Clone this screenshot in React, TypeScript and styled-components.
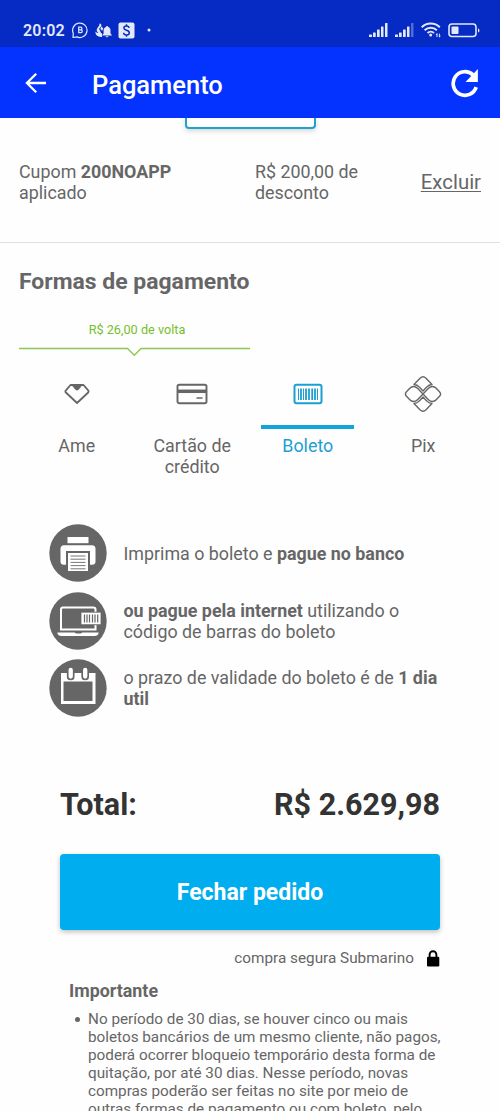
import React from 'react';
import styled, { createGlobalStyle } from 'styled-components';

const GlobalStyle = createGlobalStyle`
  * { box-sizing: border-box; }
  body {
    margin: 0;
    background: #fefefe;
    color: #666;
    font-family: Roboto, 'Liberation Sans', sans-serif;
  }
`;

const Screen = styled.div`
  width: 500px;
  height: 1111px;
  overflow: hidden;
  display: flex;
  flex-direction: column;
`;

const StatusBar = styled.div`
  flex: none;
  height: 47px;
  padding: 13px 20px 0 23px;
  display: flex;
  justify-content: space-between;
  background: #062bc4;
  color: #e3e8fb;
`;

const StatusGroup = styled.div<{ $gap: number }>`
  display: flex;
  align-items: center;
  height: 34px;
  gap: ${(p) => p.$gap}px;
`;

const Clock = styled.span`
  width: 43px;
  font-size: 16px;
  font-weight: 600;
  letter-spacing: 0.2px;
  white-space: nowrap;
`;

const Header = styled.header`
  flex: none;
  height: 71px;
  padding: 0 21px 0 25px;
  display: flex;
  align-items: center;
  background: #0433ff;
  color: #fff;
`;

const HeaderTitle = styled.h1`
  flex: 1;
  margin: 4px 0 0 45px;
  font-size: 25.5px;
  font-weight: 500;
  line-height: 30px;
`;

const Coupon = styled.section`
  flex: none;
  height: 125px;
  border-bottom: 1px solid #e0e0e0;
`;

const CutButton = styled.div`
  width: 131px;
  height: 11px;
  margin: 0 auto;
  border: 2px solid #1fa3cb;
  border-top: 0;
  border-radius: 0 0 4px 4px;
  box-shadow: 0 2px 5px rgba(0, 0, 0, 0.16);
`;

const CouponRow = styled.div`
  display: flex;
  align-items: center;
  padding: 32px 19px 0;
  font-size: 17.85px;
  line-height: 21px;
`;

const CouponCell = styled.div<{ $width: number }>`
  width: ${(p) => p.$width}px;
`;

const RemoveLink = styled.a`
  margin-left: auto;
  font-size: 20.4px;
  text-decoration: underline;
  text-decoration-thickness: 1px;
  text-underline-offset: 2px;
`;

const Methods = styled.section`
  flex: none;
  height: 281px;
  padding: 25px 19px 0;
`;

const SectionTitle = styled.h2`
  margin: 0;
  font-size: 22.95px;
  font-weight: 700;
  line-height: 28px;
`;

const Cashback = styled.div`
  width: 231px;
  margin-top: 25px;
  display: flex;
  flex-direction: column;
  align-items: center;
  gap: 8px;
  color: #74c02c;
  font-size: 12.7px;
  line-height: 18px;
`;

const CashbackText = styled.span`
  padding-left: 5px;
`;

const Tabs = styled.div`
  display: grid;
  grid-template-columns: repeat(4, 1fr);
  margin-top: 14px;
`;

const Tab = styled.div<{ $active?: boolean }>`
  display: flex;
  flex-direction: column;
  align-items: center;
  text-align: center;
  font-size: 17.85px;
  line-height: 21px;
  color: ${(p) => (p.$active ? '#1d9fd3' : '#666')};
`;

const TabIcon = styled.div<{ $active?: boolean }>`
  width: 93px;
  height: 58px;
  padding-top: 4px;
  margin-bottom: 6px;
  display: flex;
  justify-content: center;
  align-items: flex-start;
  border-bottom: 4px solid ${(p) => (p.$active ? '#12a4dc' : 'transparent')};

  svg {
    height: 38px;
  }
`;

const Steps = styled.ul`
  flex: none;
  list-style: none;
  margin: 0;
  padding: 0 49px 0 49px;
  display: flex;
  flex-direction: column;
  gap: 9.5px;
`;

const Step = styled.li`
  display: flex;
  align-items: center;
  gap: 16.5px;
  font-size: 17.85px;
  line-height: 21px;
  white-space: nowrap;
`;

const Checkout = styled.section`
  flex: none;
  padding: 69px 60px 0;
`;

const Total = styled.div`
  display: flex;
  justify-content: space-between;
  color: #333;
  font-size: 30.5px;
  font-weight: 700;
  line-height: 38px;
`;

const SubmitButton = styled.button`
  display: block;
  width: 100%;
  height: 76px;
  margin-top: 30px;
  border: 0;
  border-radius: 4px;
  background: #00adef;
  box-shadow: 0 2px 5px rgba(0, 0, 0, 0.25);
  color: #fff;
  font: 700 23px Roboto, sans-serif;
`;

const Secure = styled.div`
  display: flex;
  justify-content: flex-end;
  align-items: center;
  gap: 12px;
  margin-top: 18px;
  font-size: 15.3px;
  line-height: 20px;
`;

const Notice = styled.section`
  padding: 12px 50px 0 69px;
  font-size: 15.28px;
  line-height: 18.1px;
`;

const NoticeTitle = styled.h3`
  margin: 0 0 8px;
  font-size: 17.85px;
  line-height: 22px;
`;

const NoticeItem = styled.div`
  display: flex;
  gap: 8px;
  white-space: nowrap;
`;

const Bullet = styled.span`
  flex: none;
  width: 5px;
  height: 5px;
  margin: 7px 0 0 6px;
  border-radius: 50%;
  background: #666;
`;

const ChatIcon = () => (
  <svg width="17" height="17" viewBox="0 0 17 17" fill="none" stroke="currentColor">
    <path d="M1 15.500l.3-4.200A7.200 7.200 0 1 1 5 14.900z" strokeWidth="1.200" strokeLinejoin="round" />
    <path d="M6.700 5.200h1.900a1.300 1.300 0 0 1 0 2.700H6.700zM6.700 7.900h2.200a1.400 1.400 0 0 1 0 2.800H6.700z" strokeWidth="1.200" />
  </svg>
);

const MutedIcon = () => (
  <svg width="17" height="15" viewBox="0 0 17 15" fill="currentColor">
    <path d="M4.500.5c1.700.2 2.300 1.500 1.600 2.800L4 6c1.700 2 1.500 4.400 3 4.600V14C3 14.400.2 12.200.4 8.600c1 1.200 2 1.700 2.800 1.200-1.500-1.200-2-3-.9-4.600C3 4 4.700 3 4.500.5z" />
    <path d="M12.100 3c.8 0 1 .5 1.100 1 1.600.5 2.300 1.800 2.300 3.500v3l1.300 1.400v.7H7.300v-.7l1.300-1.400v-3C8.600 5.800 9.400 4.500 11 4c.1-.5.4-1 1.100-1zM10.500 13.200h3c-.3 1.500-2.700 1.500-3 0z" />
    <path d="M6.500 3.200l1.700 2.200-1 2.400L5.300 6z" />
  </svg>
);

const DollarIcon = () => (
  <svg width="17" height="17" viewBox="0 0 17 17">
    <rect x="0.500" y="0.500" width="16" height="16" rx="2" fill="currentColor" />
    <path d="M11.200 5.800C11 4.500 9.900 3.900 8.500 3.900 7 3.900 5.900 4.700 5.900 6c0 3 5.400 1.500 5.400 4.700 0 1.400-1.200 2.300-2.800 2.300-1.700 0-2.800-.9-2.900-2.300M8.500 2.200v2M8.500 12.700v2" fill="none" stroke="#062bc4" strokeWidth="1.500" />
  </svg>
);

const DotIcon = () => (
  <svg width="11" height="4" viewBox="0 0 11 4"><circle cx="8" cy="2" r="1.500" fill="currentColor" /></svg>
);

const SignalIcon = ({ faded }: { faded?: boolean }) => (
  <svg width="19" height="14" viewBox="0 0 19 14" fill="currentColor">
    <rect x="0" y="11.500" width="3" height="2.500" rx=".5" />
    <rect x="4" y="9.500" width="2.700" height="4.500" rx=".5" />
    <rect x="8" y="6.500" width="2.700" height="7.500" rx=".5" />
    <rect x="12" y="3.500" width="2.500" height="10.500" rx=".5" />
    <rect x="16" y="0" width="2.500" height="14" rx=".5" opacity={faded ? 0.35 : 1} />
  </svg>
);

const WifiIcon = () => (
  <svg width="20" height="16" viewBox="0 0 20 16" fill="none" stroke="currentColor" strokeWidth="1.900">
    <path d="M.7 5.200c5-4.900 13.100-4.900 18.100 0M3.600 8.200c3.400-3.300 8.900-3.300 12.300 0M6.500 11c1.900-1.700 4.700-1.700 6.500 0" />
    <circle cx="9.700" cy="13" r="1.500" fill="currentColor" stroke="none" />
    <path d="M16 11.500v3.500M18.400 15.200v-3.500M15 13l1-1.300M19.300 13.800l-1 1.300" strokeWidth="1" />
  </svg>
);

const BatteryIcon = () => (
  <svg width="32" height="15" viewBox="0 0 32 15" fill="none">
    <rect x="1" y="1" width="27" height="12.500" rx="3" stroke="currentColor" strokeWidth="1.600" />
    <rect x="3.500" y="3.500" width="7" height="7.500" rx="1" fill="currentColor" />
    <path d="M30 5.200c2 .8 2 3.500 0 4.300z" fill="currentColor" />
  </svg>
);

const BackIcon = () => (
  <svg width="22" height="22" viewBox="0 0 22 22" fill="none" stroke="currentColor" strokeWidth="2.300">
    <path d="M21 11H2.300M11.200 1.700L1.900 11l9.300 9.300" />
  </svg>
);

const ReloadIcon = () => (
  <svg width="30" height="30" viewBox="0 0 30 30">
    <path d="M27.200 19.200A11.800 11.800 0 1 1 24 6.800" fill="none" stroke="currentColor" strokeWidth="3.700" />
    <path d="M28.900 1v13H16.500z" fill="currentColor" />
  </svg>
);

const CashbackLine = () => (
  <svg width="231" height="10" viewBox="0 0 231 10" fill="none" stroke="#8cc751" strokeWidth="1.300">
    <path d="M0 1.500h108.500l6.800 6.800 6.800-6.800H231" />
  </svg>
);

const AmeIcon = () => (
  <svg width="28" height="34" viewBox="0 0 28 34" stroke="#666" strokeLinejoin="round">
    <path d="M7.500 8h13l4.700 5.300c.6.700.6 1.500 0 2.200L14 26 2.900 15.500c-.7-.7-.7-1.500 0-2.200z" fill="none" strokeWidth="1.800" />
    <path d="M9 8h10l-3.700 4.500q-1.300 1-2.600 0z" fill="#666" strokeWidth="1" />
  </svg>
);

const CardIcon = () => (
  <svg width="32" height="34" viewBox="0 0 32 34" fill="none" stroke="#666">
    <rect x="1.500" y="7.800" width="29" height="18.500" rx="1.800" strokeWidth="1.900" />
    <path d="M1 14.300h30" strokeWidth="3.500" />
    <path d="M20.500 21h6" strokeWidth="1.500" />
  </svg>
);

const BoletoIcon = () => (
  <svg width="30" height="34" viewBox="0 0 30 34" fill="none" stroke="#1d9fd3">
    <rect x="1.500" y="7.800" width="27" height="18.500" rx="2" strokeWidth="2" />
    <path d="M5.500 11.500V23M10.500 11.500V23M24.500 11.500V23" strokeWidth="1" />
    <path d="M8 11.500V23M13 11.500V23M16 11.500V23M19.200 11.500V23M22 11.500V23" strokeWidth="1.800" />
  </svg>
);

const PixIcon = () => (
  <svg width="38" height="38" viewBox="0 0 38 38" fill="none" stroke="#666" strokeWidth="1.400" strokeLinejoin="round">
    <path d="M10 9.500l6-6.300q3-3 6 0l6 6.300c-2.400.2-3.900 1-5.300 2.600L19 16l-3.700-3.900C13.900 10.500 12.400 9.700 10 9.500z" />
    <path d="M10 28.500l6 6.300q3 3 6 0l6-6.300c-2.400-.2-3.900-1-5.300-2.600L19 22l-3.700 3.900c-1.400 1.600-2.900 2.400-5.300 2.600z" />
    <path d="M19 19l-5.500-5.700c-2.400-2.500-5.600-2.300-7.700-.1l-3.300 3.500q-2.200 2.300 0 4.600l3.300 3.500c2.100 2.200 5.300 2.400 7.700-.1z" />
    <path d="M19 19l5.500-5.700c2.400-2.500 5.600-2.300 7.700-.1l3.300 3.500q2.200 2.300 0 4.600l-3.300 3.500c-2.100 2.200-5.300 2.400-7.700-.1z" />
  </svg>
);

const PrinterIcon = () => (
  <svg width="58" height="58" viewBox="0 0 58 58">
    <circle cx="29" cy="29" r="28.700" fill="#666" />
    <path d="M18.500 13h21v6.200h-21z" fill="#fff" />
    <path d="M15 21.200h28q3.500 0 3.500 3.500v13q0 3-3.500 3h-2V27H17v13.700h-2q-3.500 0-3.500-3v-13q0-3.500 3.500-3.500z" fill="#fff" />
    <path d="M19 29h20v18H19z" fill="#fff" />
    <path d="M21.500 32h15M21.500 35.200h15M21.500 38.400h15M21.500 41.600h15M21.500 44.800h15" stroke="#777" strokeWidth="1" />
  </svg>
);

const LaptopIcon = () => (
  <svg width="58" height="58" viewBox="0 0 58 58">
    <circle cx="29" cy="29" r="28.700" fill="#666" />
    <path d="M46.500 20v-2.500q0-2-2-2H14q-2 0-2 2v20h34.500V33" fill="none" stroke="#fff" strokeWidth="2" />
    <path d="M8.500 40.500h41v1.300q-1 2.200-4 2.200h-33q-3 0-4-2.200z" fill="#fff" />
    <path d="M26 40h7v1q-3.500 1-7 0z" fill="#666" />
    <path d="M32 20.200h20v12.500H32z" fill="#fff" stroke="#666" strokeWidth=".8" />
    <path d="M35.500 22.500v8M38 22.500v8M40.500 22.500v8M43.500 22.500v8M46 22.500v8M48.700 22.500v8" stroke="#666" strokeWidth="1.200" />
  </svg>
);

const CalendarIcon = () => (
  <svg width="58" height="58" viewBox="0 0 58 58">
    <circle cx="29" cy="29" r="28.700" fill="#666" />
    <path d="M12 14h34.500v31H12z" fill="#fff" />
    <path d="M14.500 22.500h29V42h-29z" fill="#666" />
    <g fill="#fff" stroke="#666" strokeWidth="1.700">
      <rect x="18.700" y="8" width="6" height="12.500" rx="3" />
      <rect x="33.200" y="8" width="6" height="12.500" rx="3" />
    </g>
  </svg>
);

const LockIcon = () => (
  <svg width="14" height="17" viewBox="0 0 14 17">
    <path d="M3.600 8V4.700a3.400 3.400 0 0 1 6.800 0V8" fill="none" stroke="#000" strokeWidth="1.900" />
    <rect x="1" y="6.800" width="12.300" height="9.700" rx="1.200" fill="#000" />
  </svg>
);

export default function App() {
  return (
    <Screen>
      <GlobalStyle />
      <StatusBar>
        <StatusGroup $gap={6}>
          <Clock>20:02</Clock>
          <ChatIcon />
          <MutedIcon />
          <DollarIcon />
          <DotIcon />
        </StatusGroup>
        <StatusGroup $gap={7}>
          <SignalIcon />
          <SignalIcon faded />
          <WifiIcon />
          <BatteryIcon />
        </StatusGroup>
      </StatusBar>
      <Header>
        <BackIcon />
        <HeaderTitle>Pagamento</HeaderTitle>
        <ReloadIcon />
      </Header>

      <Coupon>
        <CutButton />
        <CouponRow>
          <CouponCell $width={236}>Cupom <b>200NOAPP</b><br />aplicado</CouponCell>
          <CouponCell $width={120}>R$ 200,00 de<br />desconto</CouponCell>
          <RemoveLink>Excluir</RemoveLink>
        </CouponRow>
      </Coupon>

      <Methods>
        <SectionTitle>Formas de pagamento</SectionTitle>
        <Cashback>
          <CashbackText>R$ 26,00 de volta</CashbackText>
          <CashbackLine />
        </Cashback>
        <Tabs>
          <Tab><TabIcon><AmeIcon /></TabIcon>Ame</Tab>
          <Tab><TabIcon><CardIcon /></TabIcon>Cartão de<br />crédito</Tab>
          <Tab $active><TabIcon $active><BoletoIcon /></TabIcon>Boleto</Tab>
          <Tab><TabIcon><PixIcon /></TabIcon>Pix</Tab>
        </Tabs>
      </Methods>

      <Steps>
        <Step><PrinterIcon /><span>Imprima o boleto e <b>pague no banco</b></span></Step>
        <Step><LaptopIcon /><span><b>ou pague pela internet</b> utilizando o<br />código de barras do boleto</span></Step>
        <Step><CalendarIcon /><span>o prazo de validade do boleto é de <b>1 dia<br />util</b></span></Step>
      </Steps>

      <Checkout>
        <Total><span>Total:</span><span>R$ 2.629,98</span></Total>
        <SubmitButton>Fechar pedido</SubmitButton>
        <Secure>compra segura Submarino <LockIcon /></Secure>
      </Checkout>

      <Notice>
        <NoticeTitle>Importante</NoticeTitle>
        <NoticeItem>
          <Bullet />
          <span>
            No período de 30 dias, se houver cinco ou mais<br />
            boletos bancários de um mesmo cliente, não pagos,<br />
            poderá ocorrer bloqueio temporário desta forma de<br />
            quitação, por até 30 dias. Nesse período, novas<br />
            compras poderão ser feitas no site por meio de<br />
            outras formas de pagamento ou com boleto, pelo
          </span>
        </NoticeItem>
      </Notice>
    </Screen>
  );
}
